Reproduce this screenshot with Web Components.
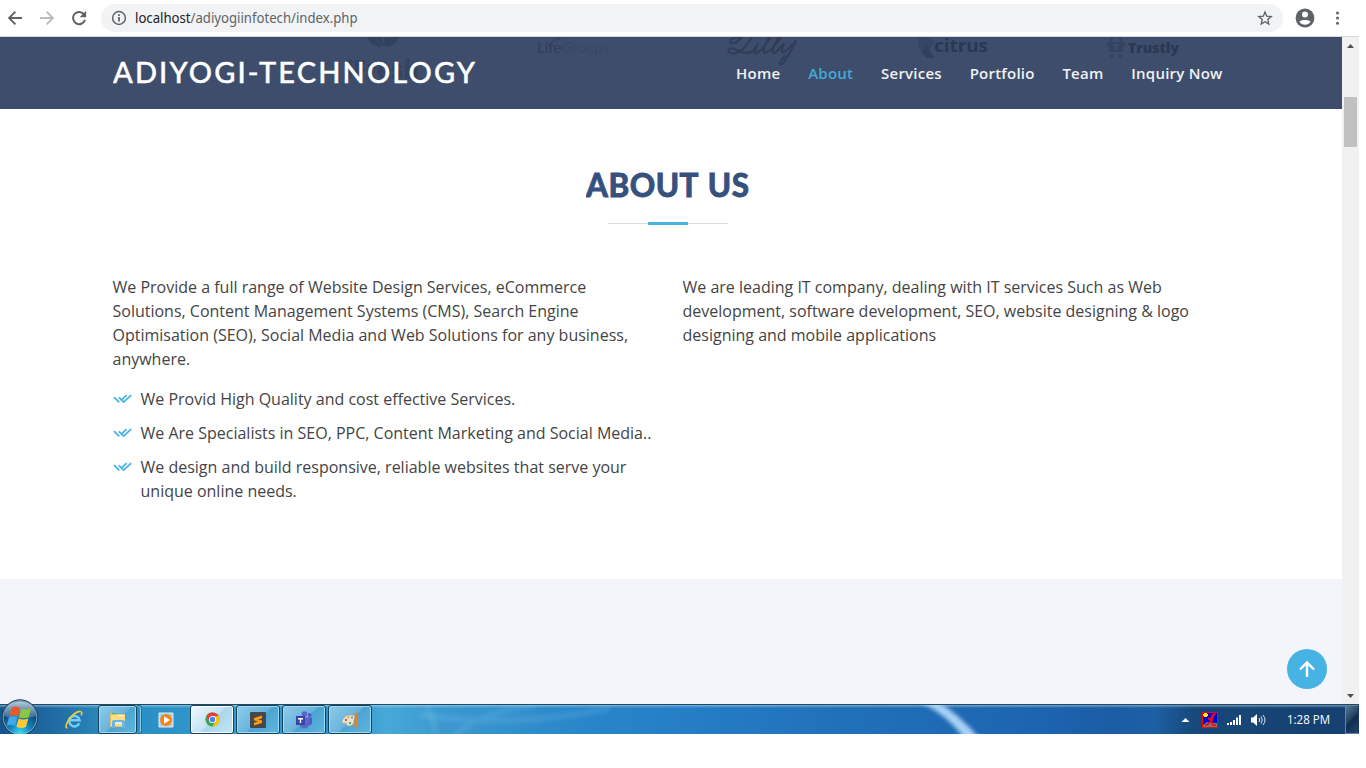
<!DOCTYPE html>
<html lang="en">
<head>
<meta charset="utf-8">
<title>Adiyogi-Technology</title>
<style>
html,body{margin:0;background:#fff;overflow:hidden}
body{height:768px}
</style>
</head>
<body>
<desktop-screen>
  <browser-toolbar></browser-toolbar>
  <page-view>
    <site-header></site-header>
    <about-section>
      <section-title>ABOUT US</section-title>
      <div slot="left">We Provide a full range of Website Design Services, eCommerce Solutions, Content Management Systems (CMS), Search Engine Optimisation (SEO), Social Media and Web Solutions for any business, anywhere.</div>
      <check-item slot="list">We Provid High Quality and cost effective Services.</check-item>
      <check-item slot="list">We Are Specialists in SEO, PPC, Content Marketing and Social Media..</check-item>
      <check-item slot="list">We design and build responsive, reliable websites that serve your unique online needs.</check-item>
      <div slot="right">We are leading IT company, dealing with IT services Such as Web development, software development, SEO, website designing &amp; logo designing and mobile applications</div>
    </about-section>
    <next-band></next-band>
  </page-view>
  <page-scrollbar slot="scroll"></page-scrollbar>
  <task-bar slot="taskbar"></task-bar>
</desktop-screen>
<script>
const define=(name,html)=>customElements.define(name,class extends HTMLElement{
  constructor(){
    super();
    const t=document.createElement('template');
    t.innerHTML=html;
    this.attachShadow({mode:'open'}).append(t.content.cloneNode(true));
  }
});

define('desktop-screen',`<style>
:host{display:block;width:1359px;height:734px;overflow:hidden}
.s{display:grid;grid-template:37px 667px 30px / 1342px 17px;height:734px}
::slotted(browser-toolbar),::slotted(task-bar){grid-column:1 / 3}
</style><div class="s"><slot></slot><slot name="scroll"></slot><slot name="taskbar"></slot></div>`);

define('browser-toolbar',`<style>
:host{display:flex;box-sizing:border-box;height:37px;border-bottom:1px solid #d5d7db;background:#fff;align-items:center;color:#5f6368}
.nav{display:flex;width:101px;box-sizing:border-box;padding-left:7px;gap:16px}
.bar{display:flex;align-items:center;width:1182px;height:28px;border-radius:14px;background:#f1f3f4;box-sizing:border-box;padding:0 10px;}
.url{flex:1;margin-left:8px;font:14px/20px "Noto Sans","Open Sans",sans-serif;color:#5f6368;}
.url svg{display:block}
svg{display:block;flex:none}
.av{margin-left:12px}.dots{margin-left:15px}
</style>
<div class="nav">
<svg width="16" height="16" viewBox="0 0 16 16" fill="none" stroke="#5f6368" stroke-width="1.9"><path d="M15 8H2.3M8.4 1.7L2.1 8l6.3 6.3"/></svg>
<svg width="16" height="16" viewBox="0 0 16 16" fill="none" stroke="#babcbe" stroke-width="1.9"><path d="M1 8h12.7M7.6 1.7L13.9 8l-6.3 6.3"/></svg>
<svg width="16" height="16" viewBox="0 0 16 16"><path d="M13.2 4.6A6.1 6.1 0 1 0 14 9.8" fill="none" stroke="#5f6368" stroke-width="2"/><path d="M15.1.7v6.5H8.6z" fill="#5f6368"/></svg>
</div>
<div class="bar">
<svg width="16" height="16" viewBox="0 0 16 16"><circle cx="8" cy="8" r="6.4" fill="none" stroke="#5f6368" stroke-width="1.5"/><path d="M7.1 7h1.8v4.6H7.1zM7.1 4.2h1.8v1.7H7.1z" fill="#5f6368"/></svg>
<div class="url"><svg width="230" height="20"><text x="0" y="15" font-size="13.6" textLength="222.5" lengthAdjust="spacingAndGlyphs" fill="#5f6368"><tspan fill="#202124">localhost</tspan>/adiyogiinfotech/index.php</text></svg></div>
<svg width="16" height="16" viewBox="0 0 16 16" fill="none" stroke="#5f6368" stroke-width="1.35"><path d="M8 2l1.7 4.2 4.5.4-3.4 3 1 4.4L8 11.7 4.2 14l1-4.4-3.4-3 4.5-.4z"/></svg>
</div>
<svg class="av" width="20" height="20" viewBox="0 0 20 20"><circle cx="10" cy="10" r="9.4" fill="#5f6368"/><circle cx="10" cy="6.6" r="3" fill="#fff"/><path d="M4.4 13.8C5.6 11.3 14.4 11.3 15.6 13.8 13.2 17.8 6.8 17.8 4.4 13.8z" fill="#fff"/></svg>
<svg class="dots" width="16" height="16" viewBox="0 0 16 16" fill="#5f6368"><circle cx="7.5" cy="3" r="1.5"/><circle cx="7.5" cy="8.1" r="1.5"/><circle cx="7.5" cy="13.2" r="1.5"/></svg>`);

define('page-view',`<style>:host{display:flex;flex-direction:column;overflow:hidden;position:relative;background:#fff}
.up{position:absolute;left:1287px;top:612px;width:40px;height:40px}</style><slot></slot>
<svg class="up" viewBox="0 0 40 40"><circle cx="20" cy="20" r="20" fill="#47b2e4"/><path d="M20 28V14M13 20.5L20 13.5l7 7" fill="none" stroke="#fff" stroke-width="2.4"/></svg>`);

define('site-header',`<style>
:host{display:flex;position:relative;height:72px;flex:none;background:#3e4d6b;justify-content:space-between;box-sizing:border-box;padding:0 119.5px 0 112.5px;}
.ghost{position:absolute;left:0;top:0}
.brand{position:relative;display:block;margin-top:16px}
nav{position:relative;display:flex;gap:27.8px;margin-top:25px;font:600 15px/23px "Open Sans",sans-serif;color:#f0f2f5;white-space:nowrap;letter-spacing:.23px}
nav b{font-weight:600;color:#45a9d9}
</style>
<svg class="ghost" width="1342" height="72" fill="#2d3c59">
<g opacity=".7"><path d="M367 0q4 9 14 10-1-7-7-10zM399 0q-3 9-14 10 1-7 7-10zM376 0h6l1 9q-6-3-7-9zM384 0h6q-1 6-7 9z"/></g>
<text x="346" y="42" font-family="Open Sans" font-weight="800" font-size="26" textLength="73" fill="#35445f" lengthAdjust="spacingAndGlyphs">iFresh</text>
<path d="M551 5q4-5 10-5-1 4-10 5z" opacity=".5"/>
<text x="537" y="16" font-family="Lato" font-size="15" textLength="72" lengthAdjust="spacingAndGlyphs" fill="#303f5b">Life<tspan fill="#35455f" opacity=".65">Groups</tspan></text>
<g fill="none" stroke="#303e59" stroke-width="2.2" stroke-linecap="round" stroke-linejoin="round"><path d="M752 0C747 8 741 17 732 16.500 726 15 728 10 734 12 741 15 747 18 753 14L758 7C755 13 753 17 757 16 761 14 768 5 770 1 772-2 770-2 768 2 764 9 762 16 765 16 770 15 778 5 780 2 782-1 779-1 777 3 773 10 771 16 774 16 777 15 780 11 782 8M784 7C781 13 781 16 784 15 788 13 790 10 796 4M796 5C790 14 787 23 782 27 779 29 779 24 785 19"/><path d="M740 0C732 0 728 4 731 6 734 7 739 4 742 0"/></g>
<path d="M919 0h7l9 5-7 8 6 8h-7l-9-12z" fill="#2c3c58" opacity=".45"/><path d="M926 8l9 13h-9l-5-6z" opacity=".6"/>
<text x="934" y="15" font-family="Open Sans" font-weight="700" font-size="18" textLength="54" lengthAdjust="spacingAndGlyphs" fill="#293854">citrus</text>
<g opacity=".5"><path d="M1107 5h18l-2 10h-14z"/><path d="M1111 6V2q5-5 10 0v4" fill="none" stroke="#2d3c59" stroke-width="2"/><circle cx="1112" cy="19" r="2"/><circle cx="1120" cy="19" r="2"/><path d="M1113 7h6v2h-2v4h-2V9h-2z" fill="#3e4e6b"/></g>
<text x="1128" y="16" font-family="Open Sans" font-weight="800" font-size="14" textLength="51" lengthAdjust="spacingAndGlyphs" fill="#293854">Trustly</text>
</svg>
<svg class="brand" width="366" height="40"><text x="0" y="30" font-family="Lato, sans-serif" font-weight="500" font-size="29" textLength="362" fill="#fff" stroke="#fff" stroke-width=".4">ADIYOGI-TECHNOLOGY</text></svg>
<nav><span>Home</span><b>About</b><span>Services</span><span>Portfolio</span><span>Team</span><span>Inquiry Now</span></nav>`);

define('about-section',`<style>
:host{display:block;height:470px;flex:none;box-sizing:border-box;padding:58px 0 0 97.5px;font:16px/24px "Open Sans",sans-serif;color:#444}
.c{width:1140px}
.cols{display:grid;grid-template-columns:1fr 1fr;margin-top:50px}
.cols>div{padding:0 15px}
.list{display:flex;flex-direction:column;gap:10px;margin-top:16px}
</style><div class="c"><slot></slot><div class="cols"><div><slot name="left"></slot><div class="list"><slot name="list"></slot></div></div><div><slot name="right"></slot></div></div></div>`);

define('section-title',`<style>
:host{display:flex;flex-direction:column;align-items:center;height:58px}
.t{display:block}
.rule{width:120px;height:3px;margin-top:15px;display:grid;grid-template-columns:40px 40px 40px;align-items:center}
.rule i{height:1px;background:#ddd}.rule i:nth-child(2){height:3px;background:#47b2e4}
</style><svg class="t" width="164" height="40"><text x="0" y="30" font-family="Lato, sans-serif" font-weight="700" font-size="31.500" textLength="163" word-spacing="1.500" fill="#37517e" stroke="#37517e" stroke-width="1">ABOUT US</text></svg>
<div class="rule"><i></i><i></i><i></i></div>`);

define('check-item',`<style>
:host{display:flex;align-items:flex-start}
svg{flex:none;margin:5px 8px -5px 0}
</style><svg width="20" height="20" viewBox="0 0 20 20" fill="none" stroke="#47b2e4" stroke-width="1.8"><path d="M1 5.200L6.200 10.400M5.800 5.400L10.600 10.100 18.200 3.100M9 7.700L13.600 3.200"/></svg><div><slot></slot></div>`);

define('next-band',`<style>:host{display:block;flex:1;background:#f3f5fa}</style>`);

define('page-scrollbar',`<style>
:host{display:flex;flex-direction:column;align-items:center;justify-content:space-between;background:#f1f1f1;box-sizing:border-box;padding:7px 0 6px}
.thumb{width:13px;height:50px;background:#c1c1c1;margin-top:49px;margin-bottom:auto}
svg{display:block}
</style><svg width="7" height="4"><path d="M0 4L3.5 0 7 4z" fill="#505050"/></svg><div class="thumb"></div><svg width="7" height="4"><path d="M0 0L3.5 4 7 0z" fill="#505050"/></svg>`);

define('task-button',`<style>
:host{display:flex;width:44px;height:29px;box-sizing:border-box;border:1px solid #15435f;border-radius:3px;align-items:center;justify-content:center;box-shadow:inset 0 0 0 1px #a2d9ef;background:linear-gradient(135deg,#8ecbe9 0,#69b4dc 50%,#4da4d2 54%,#5cb8dd)}
:host([active]){background:linear-gradient(135deg,#f0f8fc,#c5e2f2 50%,#acd5ec 54%,#c2e8f6);box-shadow:inset 0 0 0 1px #fff}
</style><slot></slot>`);

define('task-bar',`<style>
:host{display:flex;position:relative;height:30px;box-sizing:border-box;border-top:1px solid #234a61;background:linear-gradient(#c2e4f680 0,#fff0 3px),linear-gradient(90deg,#16568b 0,#1e69a0 50px,#2c86bb 100px,#2b8fc6 145px,#359bd0 240px,#2c93c9 350px,#48a9d8 385px,#3b99d0 440px,#2986c9 580px,#257ec6 680px,#2070b9 850px,#1d64b0 1040px,#1b5da5 1110px,#1d5fa4 1155px,#174879 1195px,#153f70 1359px);font:12px "Open Sans",sans-serif}
.glow{position:absolute;left:0;top:0}
.orb{position:absolute;left:0;top:-6px;overflow:visible}
.apps{position:relative;display:flex;padding-left:62px;width:1119px;box-sizing:border-box}
.ico{display:flex;align-items:center;justify-content:center;width:24px;height:29px}
.stack{width:4px;height:27px;border:1px solid #2a6a8c;border-left:0;border-radius:0 3px 3px 0;box-shadow:inset -1px 0 #8fd0ea}
.tray{position:relative;display:flex;align-items:center;width:240px}
svg{display:block;flex:none}
.peek{flex:none;width:14px;height:29px;box-sizing:border-box;border:1px solid #6384a2;border-right-color:#1b3554;background:linear-gradient(135deg,#5a7895,#1e3e62 48%,#112b4b 50%,#1a4675)}
</style>
<svg class="glow" width="1359" height="29"><defs><filter id="f" x="-30%" y="-60%" width="160%" height="220%"><feGaussianBlur stdDeviation="2"/></filter></defs>
<g fill="none" stroke="#a4d5f5" filter="url(#f)"><path d="M426 0q8 15 10 30" stroke-width="6" opacity=".15"/><path d="M455 30q25-23 80-30M420 10q90 14 190-7" stroke-width="6" opacity=".15"/></g>
<path d="M914-6h20q24 14 48 42h-16Q948 9 914-6z" fill="#a9d2f6" filter="url(#f)"/></svg>
<div class="apps">
<div class="ico"><svg width="20" height="20" viewBox="0 0 20 20"><path d="M15.3 13.1A5.2 5.2 0 1 1 15.600 10.300H6" fill="none" stroke="#72cdf7" stroke-width="2.5"/><path d="M3.500 17.500C0 19 3 9.500 9.500 4.500 16-.500 19 1 17.300 5.500" fill="none" stroke="#f4c944" stroke-width="1.6"/></svg></div>
<task-button style="margin-left:12px;width:39px"><svg width="18" height="18" viewBox="0 0 18 18"><path d="M1 2h5l1 1h9v13H1z" fill="#e3bf60"/><path d="M2 4h14v11H2z" fill="#f7df8a"/><path d="M3 2h4v1H3z" fill="#63ae4b"/><path d="M9 4h6v1H9z" fill="#fffbd4"/><path d="M3 11q0-2 2-2h9q2 0 2 2v6h-3v-4H6v4H3z" fill="#6fb4dc"/><path d="M6 11h7v2H6z" fill="#d7f0fb"/></svg></task-button><div class="stack"></div>
<div class="ico" style="margin-left:12px"><svg width="16" height="16" viewBox="0 0 16 16"><path d="M1 1h14v14H1z" fill="#a9cfe8" stroke="#d9eef9"/><circle cx="8" cy="8" r="6" fill="#f58414"/><path d="M6 4.3l6 3.7-6 3.7z" fill="#fff"/></svg></div>
<task-button active style="margin-left:12px"><svg width="15" height="15" viewBox="0 0 20 20"><circle cx="10" cy="10" r="9.5" fill="#38a852"/><path d="M1.8 5.2A9.5 9.5 0 0 1 18.3 5.5H10L6 12.5z" fill="#e44134"/><path d="M18.3 5.5A9.5 9.5 0 0 1 9.5 19.5L14 12.3 10 5.5z" fill="#fbc116"/><circle cx="10" cy="10" r="4.7" fill="#fff"/><circle cx="10" cy="10" r="3.6" fill="#4285f4"/></svg></task-button>
<task-button style="margin-left:2px"><svg width="16" height="16" viewBox="0 0 16 16"><rect width="16" height="16" rx="1" fill="#44474b"/><path d="M4 6L12 3.500v2.700L8.200 7.400 12 8.600v2.400L4 13.500v-2.700l3.900-1.300L4 8.300z" fill="#ff9912"/></svg></task-button>
<task-button style="margin-left:2px"><svg width="18" height="18" viewBox="0 0 18 18"><circle cx="14.7" cy="4" r="1.9" fill="#5059c9"/><circle cx="9.5" cy="3" r="2.8" fill="#5b62cf"/><path d="M12 6.5h5v5q0 3-4 3z" fill="#5059c9"/><path d="M5 6.5h9v6q0 5-5 5-4 0-4-5z" fill="#5f65cd"/><rect x="1" y="5" width="9" height="9" fill="#3d44a8"/><path d="M3 7h5v1.4H6.2V12H4.8V8.4H3z" fill="#fff"/></svg></task-button>
<task-button style="margin-left:2px"><svg width="18" height="18" viewBox="0 0 18 18"><path d="M2 8q2-4 8-4 5 0 4 3-2 2-1 4-1 4-5 4-3 0-3-3-4 1-4-1 0-1 1-3z" fill="#e8e6d8" stroke="#b2a68a" stroke-width=".7"/><circle cx="5" cy="9" r="1.2" fill="#e84f3d"/><circle cx="7.5" cy="6.4" r="1.2" fill="#efb72d"/><circle cx="11" cy="6.5" r="1.1" fill="#3b97d2"/><circle cx="9" cy="12" r="1.2" fill="#4eae58"/><path d="M13.3 8L14 2l3-1-.8 7 .3 8q-2 3-3-1z" fill="#e3822c"/></svg></task-button>
</div>
<div class="tray">
<svg width="9" height="6" style="margin-left:62px"><path d="M.5 5L4.500 1l4 4z" fill="#fff"/></svg>
<svg width="16" height="16" viewBox="0 0 16 16" style="margin-left:12px"><path d="M1 1h14v14H1z" fill="#0000d8"/><path d="M1 13l4-3 10 1v4H1z" fill="#777"/><path d="M2 1h3v1h1v2H5v1H2V4H1V2h1z" fill="#fff200"/><path d="M12 2l-2 2-1.500 4L6 6M14 2h-2L10 8l-5 5H3M9 8l2 5h3" fill="none" stroke="#e80b18" stroke-width="1.7"/><rect x=".5" y=".5" width="15" height="15" fill="none" stroke="#f00"/></svg>
<svg width="15" height="12" style="margin-left:9px" fill="#fff"><path d="M0 9h2v2H0zM3 8h2v3H3zM6 6h2v5H6zM9 3.5h2V11H9zM12 1h2v10h-2z"/></svg>
<svg width="16" height="14" viewBox="0 0 16 14" style="margin-left:8px"><path d="M1 4.5h2.2L7 1v12L3.2 9.5H1z" fill="#fff"/><path d="M9 5q1.5 2 0 4M11 3.5q2.7 3.5 0 7M13 2q4 5 0 10" fill="none" stroke="#dce8f3" stroke-width="1"/></svg>
<svg width="45" height="20" style="margin-left:21px"><text x="0" y="14" font-family="Open Sans" font-size="12" textLength="43" lengthAdjust="spacingAndGlyphs" fill="#fff">1:28 PM</text></svg>
<div class="peek" style="margin-left:auto"></div>
</div>
<svg class="orb" width="40" height="36" viewBox="0 0 40 36"><defs><radialGradient id="o" cx=".5" cy=".95" r=".95"><stop offset="0" stop-color="#39ddfb"/><stop offset=".3" stop-color="#168ac1"/><stop offset=".65" stop-color="#0d4a80"/><stop offset="1" stop-color="#204f7e"/></radialGradient><linearGradient id="g" x2="0" y2="1"><stop stop-color="#dfecf3" stop-opacity=".8"/><stop offset="1" stop-color="#85a9c2" stop-opacity=".35"/></linearGradient><clipPath id="c"><path d="M0-1h40v36H0z"/></clipPath></defs>
<g clip-path="url(#c)"><circle cx="20" cy="18.5" r="17.7" fill="url(#o)" stroke="#213b53"/><circle cx="20" cy="18.5" r="16.8" fill="none" stroke="#8dbad2" stroke-width=".8"/><path d="M4 17Q5 3 20 2.3 35 3 36 17 20 22 4 17z" fill="url(#g)"/>
<g transform="translate(-1.500 -.5) scale(1.03)"><path d="M12.7 9q4-2.6 8.3.2l-2.3 8.2q-4-2.6-8.2-.4z" fill="#ea5a29"/><path d="M22.2 9.8q4 2 9.6-.3L29.4 18q-4.6 2.3-9.5.1z" fill="#8ec641"/><path d="M10.2 18.3q4-2.2 8.2.4l-2.3 8q-3.5-2.3-8.2-.2z" fill="#43a6e6"/><path d="M19.5 19.4q4.4 2 9.5 0l-2.4 8.3q-4.6 2.2-9.3-.2z" fill="#fcc936"/></g></g></svg>`);
</script>
</body>
</html>
